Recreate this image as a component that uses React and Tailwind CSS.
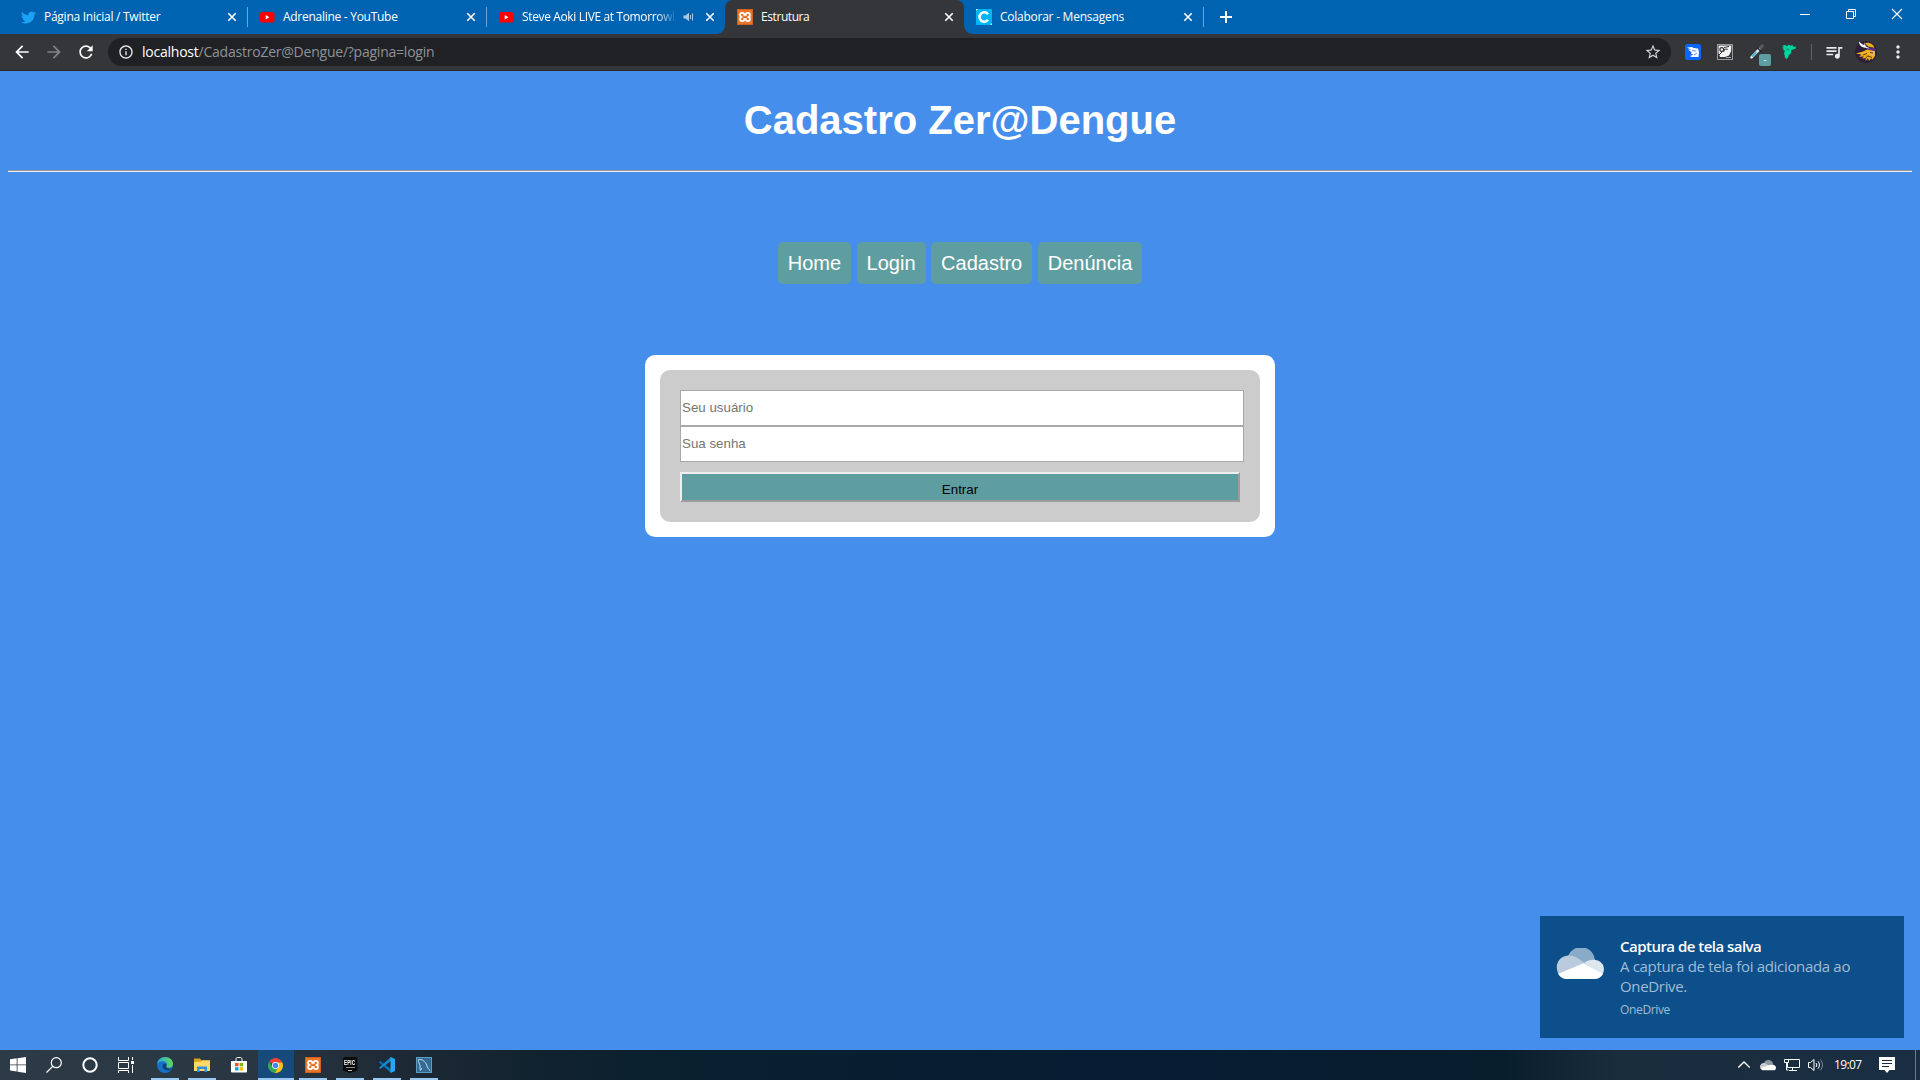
import React from "react";
import { MdArrowBack, MdArrowForward, MdRefresh, MdInfoOutline, MdStarBorder, MdQueueMusic, MdMoreVert } from "react-icons/md";
import { FaTwitter } from "react-icons/fa";

const YouTubeIcon = () => (
  <svg className="h-4 w-4" viewBox="0 0 16 16">
    <rect x="1" y="3" width="14.5" height="10.5" rx="2.6" fill="#f00" />
    <path d="M6.7 6v4.4L10.4 8.2z" fill="#fff" />
  </svg>
);

const XamppIcon = () => (
  <svg className="h-4 w-4" viewBox="0 0 16 16">
    <rect width="16" height="16" rx="1" fill="#e9752a" />
    <rect x=".5" y=".5" width="15" height="15" rx="1" fill="none" stroke="#d0611d" />
    <g fill="#fff">
      <circle cx="5.200" cy="5.900" r="3" /><circle cx="10.800" cy="5.900" r="3" />
      <circle cx="5.200" cy="10.100" r="3" /><circle cx="10.800" cy="10.100" r="3" />
      <path d="M5 6h6v4H5z" />
    </g>
    <g fill="#e9752a">
      <circle cx="5.200" cy="6" r="1.300" /><circle cx="10.800" cy="6" r="1.300" />
      <circle cx="5.200" cy="10" r="1.300" /><circle cx="10.800" cy="10" r="1.300" />
      <path d="M5.500 6.800h5v2.400h-5z" />
    </g>
  </svg>
);

const ColaborarIcon = () => (
  <svg className="h-4 w-4" viewBox="0 0 16 16">
    <rect width="16" height="16" fill="#00b4f5" />
    <path d="M12 5.200A4.700 4.700 0 1 0 12 10.800" fill="none" stroke="#fff" strokeWidth="2.600" />
    <path d="M0 0h2L0 2zM16 16h-2l2-2z" fill="#c8efff" />
  </svg>
);

const CloseIcon = () => (
  <svg className="h-4 w-4 shrink-0" viewBox="0 0 16 16">
    <path d="M4.300 4.300l7.400 7.400M11.700 4.300l-7.400 7.400" stroke="#fff" strokeWidth="1.600" />
  </svg>
);

const AudioIcon = () => (
  <svg className="h-4 w-4 shrink-0" viewBox="0 0 16 16" fill="none" stroke="#a9c8e6">
    <path d="M3.500 6.500h2L9 3.700v8.600L5.500 9.500h-2z" fill="#a9c8e6" stroke="none" />
    <path d="M10.500 6v4M12.500 4.500v7" />
  </svg>
);

const tabs = [
  { title: "Página Inicial / Twitter", icon: <FaTwitter className="h-[15px] w-[15px] text-[#1da1f2]" />, divider: true, fit: "tracking-[-0.26px]" },
  { title: "Adrenaline - YouTube", icon: <YouTubeIcon />, divider: true, fit: "tracking-[-0.28px]" },
  { title: "Steve Aoki LIVE at Tomorrowl", icon: <YouTubeIcon />, audio: true, fit: "tracking-[-0.36px]" },
  { title: "Estrutura", icon: <XamppIcon />, active: true, fit: "tracking-[-0.42px]" },
  { title: "Colaborar - Mensagens", icon: <ColaborarIcon />, divider: true, fit: "tracking-[-0.25px]" },
];

function Tab({ tab }) {
  return (
    <div className={"relative flex h-[34px] w-[239px] items-center pl-3 pr-[7px] " + (tab.active ? "rounded-t-lg bg-[#35363a]" : "")}>
      {tab.active && (
        <>
          <span className="absolute bottom-0 -left-2 h-2 w-2 bg-[radial-gradient(circle_at_0_0,transparent_7.500px,#35363a_8px)]" />
          <span className="absolute bottom-0 -right-2 h-2 w-2 bg-[radial-gradient(circle_at_100%_0,transparent_7.500px,#35363a_8px)]" />
        </>
      )}
      <span className="flex h-4 w-4 shrink-0 items-center justify-center">{tab.icon}</span>
      <span className={"ml-2 min-w-0 flex-1 whitespace-nowrap text-[12px] leading-4 text-white " + tab.fit + (tab.audio ? " [mask-image:linear-gradient(to_right,#000_85%,transparent_98%)]" : "")}>
        {tab.title}
      </span>
      {tab.audio && <span className="mr-[6px] flex"><AudioIcon /></span>}
      <CloseIcon />
      {tab.divider && <span className="absolute -right-px top-[7px] h-5 w-px bg-[#6ba5d8]" />}
    </div>
  );
}

function WindowButtons() {
  return (
    <div className="ml-auto flex h-7 items-center text-white">
      <svg className="h-3 w-[46px]" viewBox="0 0 46 12"><path d="M18 6.500h10" stroke="#fff" /></svg>
      <svg className="h-3 w-[46px]" viewBox="0 0 46 12" fill="none" stroke="#fff"><path d="M18.500 3.500h7v7h-7zM20.500 3.500v-2h7v7h-2" /></svg>
      <svg className="h-3 w-[46px]" viewBox="0 0 46 12"><path d="M18 1l10 10M28 1L18 11" stroke="#fff" strokeWidth="1.100" /></svg>
    </div>
  );
}

const Cell = ({ children }) => <span className="flex h-8 w-8 shrink-0 items-center justify-center">{children}</span>;

const BlueBirdExt = () => (
  <svg className="h-4 w-4" viewBox="0 0 16 16">
    <rect width="16" height="16" rx="2.500" fill="#0a66ff" />
    <path d="M2 3.500l5-.5 1.500 1 4.500.500 1 3.500-.500 5H7L4.500 12l4-1.200-2.500-1 .5-1.500L3 5.500l3 .3z" fill="#fff" />
    <path d="M7 6.500l4 .5M9 11l3-2" stroke="#0a66ff" strokeWidth=".7" />
  </svg>
);

const SketchExt = () => (
  <svg className="h-4 w-4" viewBox="0 0 16 16">
    <rect x=".5" y=".5" width="15" height="15" fill="#35363a" stroke="#9a9a9a" />
    <path d="M1.500 1.500h13l-.5 6-2 4-4 1.500H3L1.500 9z" fill="#f4f4f4" />
    <circle cx="4.800" cy="5.500" r="1.900" fill="none" stroke="#333" strokeWidth="1.200" />
    <path d="M7 3.500l5-1M6.500 8l1.300-3 3 .3M2 11l3-3" stroke="#333" strokeWidth="1" fill="none" />
    <path d="M9 13.500h5" stroke="#aaa" />
  </svg>
);

const PickerExt = () => (
  <span className="relative flex h-4 w-4">
    <svg className="h-4 w-4" viewBox="0 0 16 16">
      <path d="M9.500 6l3.700-4" stroke="#5b5b5b" strokeWidth="3.200" strokeLinecap="round" />
      <path d="M2.500 13.300L10 5.600" stroke="#d9f2f7" strokeWidth="2.600" strokeLinecap="round" />
      <path d="M3.300 12.600L7.500 8.300" stroke="#35b4c8" strokeWidth="1.600" />
      <path d="M8 3.500l4 4" stroke="#202020" strokeWidth="1.300" />
    </svg>
    <span className="absolute left-[10px] top-[10px] flex h-3 w-3 items-center justify-center rounded-[2px] bg-[#5f9ea0] pb-px text-[9px] leading-none text-white">-</span>
  </span>
);

const BirdExt = () => (
  <svg className="h-4 w-4" viewBox="0 0 16 16">
    <path d="M1.500 1.500L4 1l2 1.300L8 .5l1.500 1.300L12 1l-.5 1.500 3.500.3-.5 2-2.500.7L10 6.500l.3 2.500-2.300 2-1 2.500L5.500 15.500 5 13l-1 2-.3-3.500L3 9l1-2.500L1.500 6 3 5 .8 3.500l2-.3z" fill="#00d5a0" />
    <path d="M5.500 5l2.500.5" stroke="#22564b" strokeWidth=".8" />
  </svg>
);

const VikingAvatar = () => (
  <svg className="h-[22px] w-[22px]" viewBox="0 0 22 22">
    <circle cx="11" cy="11" r="11" fill="#2d1f38" />
    <path d="M10 2.200c4-1.700 8.500.8 9.500 4.500l-6-1z" fill="#e9ad1c" />
    <path d="M11 6.500l9.500.8.5 2.500-9-1z" fill="#5a2d86" />
    <path d="M4 .5c0 3.500 2 5.500 6.500 6.300l4 .7-2-2.700C9 4.500 6.500 3 4 .5zM9 .8c0 2.200 1.500 3.400 3.700 4.200l1.300 1.800C11 6 8.500 4 9 .8z" fill="#fff" />
    <path d="M8 10.500l4-2 8 1.500v5l-2.500 3.500-1.500-1-2 2.500-1-2.700L10.500 20l.3-3L7 17.500l2-2-5 .3 2.500-2L1 12.500z" fill="#eeb01e" />
    <path d="M14.500 10l5 .3.300 3.200-1.800 1.500-2.500-1.500z" fill="#e4b08c" />
    <path d="M15 11.500l3 .5M13 15l4 1.500M8 14l4-1.500M11 17l2-2.500" stroke="#4a2c14" strokeWidth=".9" />
  </svg>
);

function Browser() {
  return (
    <header className="shrink-0">
      <div className="flex h-[34px] bg-[#0063b1] pl-2">
        {tabs.map((t) => <Tab key={t.title} tab={t} />)}
        <span className="ml-[15px] flex h-[34px] w-4 items-center">
          <svg className="h-4 w-4" viewBox="0 0 16 16"><path d="M8 2v12M2 8h12" stroke="#fff" strokeWidth="2" /></svg>
        </span>
        <WindowButtons />
      </div>
      <div className="flex h-[37px] items-center border-b border-[#28292c] bg-[#35363a] pl-1.5">
        <Cell><MdArrowBack className="h-5 w-5 text-white" /></Cell>
        <Cell><MdArrowForward className="h-5 w-5 text-[#828387]" /></Cell>
        <Cell><MdRefresh className="h-5 w-5 text-white" /></Cell>
        <div className="ml-1.5 flex h-7 w-[1563px] items-center rounded-full bg-[#202124] pl-[10px] pr-[9px]">
          <MdInfoOutline className="h-4 w-4 text-[#e8eaed]" />
          <span className="ml-2 text-[14px] leading-5 tracking-[-0.23px] text-[#8f9398]"><span className="text-white">localhost</span>/CadastroZer@Dengue/?pagina=login</span>
          <MdStarBorder className="ml-auto h-[18px] w-[18px] text-[#d0d1d4]" />
        </div>
        <div className="ml-1.5 flex items-center">
          <Cell><BlueBirdExt /></Cell>
          <Cell><SketchExt /></Cell>
          <Cell><PickerExt /></Cell>
          <Cell><BirdExt /></Cell>
          <span className="ml-1.5 mr-[6px] h-4 w-px bg-[#5f6064]" />
          <Cell><MdQueueMusic className="h-5 w-5 text-[#e8eaed]" /></Cell>
          <Cell><VikingAvatar /></Cell>
          <Cell><MdMoreVert className="h-5 w-5 text-[#e8eaed]" /></Cell>
        </div>
      </div>
    </header>
  );
}

function Page() {
  return (
    <main className="flex flex-1 flex-col items-center bg-[#468eeb] px-2 font-['Liberation_Sans',Arial,sans-serif]">
      <h1 className="mt-[27px] text-[40px] font-bold leading-[45px] text-white">Cadastro Zer@Dengue</h1>
      <hr className="mt-[27px] h-0.5 w-full border-b border-t border-b-[#eee] border-t-[#9a9a9a]" />
      <nav className="mt-[70px] flex gap-[5.560px]">
        {["Home", "Login", "Cadastro", "Denúncia"].map((label) => (
          <a key={label} className="h-[42px] rounded-[5px] bg-[#5f9ea0] px-[10px] pt-[10px] text-[20px] leading-[23px] text-white">{label}</a>
        ))}
      </nav>
      <section className="mt-[71px] w-[630px] rounded-[10px] bg-white p-[15px]">
        <form className="flex flex-col rounded-[10px] bg-[#ccc] p-5 text-[13.333px]">
          <input placeholder="Seu usuário" className="h-9 w-[564px] border border-[#a9a9a9] bg-white px-px pb-0.5 placeholder:text-[#757575]" />
          <input placeholder="Sua senha" className="h-9 w-[564px] border border-[#a9a9a9] bg-white px-px pb-0.5 placeholder:text-[#757575]" />
          <button type="button" className="mt-[10px] h-[30px] border-2 border-b-[#9c9c9c] border-l-[#efefef] border-r-[#9c9c9c] border-t-[#efefef] bg-[#5f9ea0] pt-[5px] text-black">Entrar</button>
        </form>
      </section>
      <aside className="mb-3 mr-2 mt-auto flex h-[122px] w-[364px] self-end bg-[#0d4f8a] pl-4 font-['Open_Sans','Segoe_UI',sans-serif]">
        <svg className="mt-8 h-8 w-12" viewBox="0 0 48 32">
          <path d="M12 8a14 14 0 0 1 27 4l-11 3-15-7z" fill="#8aabc8" />
          <path d="M2.200 25.500C-1.500 18 2 8.500 12 7.500c4-.3 7 .8 9.500 2.500l7.500 5z" fill="#b9cbdc" />
          <path d="M28 15c3-2.500 7-3.500 10.500-3.300C47 12.500 50 20 46.500 26.500z" fill="#dce6ef" />
          <path d="M2 25.500L28 15l19 11A10 10 0 0 1 38.500 31H11c-4 0-7.500-2-9-5.500z" fill="#fff" />
        </svg>
        <div className="ml-4 pt-5">
          <p className="text-[15px] font-semibold leading-5 tracking-[-0.52px] text-white">Captura de tela salva</p>
          <p className="w-[260px] text-[15px] leading-5 tracking-[-0.33px] text-[#a0bcd5]">A captura de tela foi adicionada ao<br />OneDrive.</p>
          <p className="mt-[5px] text-[12px] leading-[18px] tracking-[-0.35px] text-[#a0bcd5]">OneDrive</p>
        </div>
      </aside>
    </main>
  );
}

const startIcons = [
  <svg className="h-4 w-4" viewBox="0 0 16 16" fill="#fff"><path d="M0 2.300L6.700 1.300v6.200H0zM7.500 1.200L16 0v7.500H7.500zM0 8.300h6.700v6.200L0 13.600zM7.500 8.300H16V16l-8.500-1.200z" /></svg>,
  <svg className="h-4 w-4" viewBox="0 0 16 16" fill="none" stroke="#fff" strokeWidth="1.200"><circle cx="10.300" cy="5.700" r="5" /><path d="M6.700 9.300L.5 15.500" /></svg>,
  <svg className="h-4 w-4" viewBox="0 0 16 16" fill="none" stroke="#fff" strokeWidth="2"><circle cx="8" cy="8" r="6.700" /></svg>,
  <svg className="h-4 w-4" viewBox="0 0 16 16" fill="none" stroke="#fff"><path d="M.5 0v3.500h10V0M.5 5.500h10v6H.5zM.5 16v-2.500h10V16M14.500 0v3M14.500 8v8" /><path d="M13 4h3v3h-3z" fill="#fff" stroke="none" /></svg>,
];

const EdgeIcon = () => (
  <svg className="h-4 w-4" viewBox="0 0 16 16">
    <defs>
      <linearGradient id="edgeTop"><stop offset="0" stopColor="#2aa9e0" /><stop offset="1" stopColor="#63d853" /></linearGradient>
    </defs>
    <circle cx="8" cy="8" r="8" fill="#1672c8" />
    <path d="M.1 7C.8 2.800 4 0 8 0c5 0 8 3.600 8 6.800 0 2.700-2 4-4 4-1.700 0-2.700-.7-2.700-1.300 0-.4.6-.8.6-1.800C9.900 5.800 8 4.300 5.500 4.300 3 4.300.8 5.500.1 7z" fill="url(#edgeTop)" />
    <path d="M5.600 9.500c0-2 1.300-3 2.500-3 1 0 1.500.8 1.400 1.700-.3.500-.6.800-.6 1.300 0 1.200 1.600 2.300 3.600 2.300 1.200 0 2.100-.3 2.800-.7-.9 1.700-2.500 2.300-4.200 2.300-3 0-5.500-1.700-5.500-3.900z" fill="#123f70" />
  </svg>
);

const FolderIcon = () => (
  <svg className="h-4 w-4" viewBox="0 0 16 16">
    <path d="M0 1.500h6l1.500 1.700H16V14H0z" fill="#e0a020" />
    <path d="M0 5l7-.3 1.200-1.200H16V14H0z" fill="#ffd968" />
    <path d="M3 15V9.500h10V15h-2.500v-3h-5v3z" fill="#2f93dc" />
  </svg>
);

const StoreIcon = () => (
  <svg className="h-4 w-4" viewBox="0 0 16 16">
    <path d="M5 4.500V2.300C5 1 5.800.5 6.600.5h2.800C10.200.5 11 1 11 2.300v2.200" fill="none" stroke="#fff" />
    <path d="M0 4h16v10.500a1 1 0 0 1-1 1H1a1 1 0 0 1-1-1z" fill="#fff" />
    <path d="M4 6h3.500v3.300H4z" fill="#f25022" /><path d="M8.500 6H12v3.300H8.500z" fill="#7fba00" />
    <path d="M4 10.200h3.500v3.300H4z" fill="#00a4ef" /><path d="M8.500 10.200H12v3.300H8.500z" fill="#ffb900" />
  </svg>
);

const ChromeIcon = () => (
  <svg className="mr-px h-[15px] w-[15px]" viewBox="0 0 16 16">
    <path d="M8 8L1.100 4A8 8 0 0 1 14.900 4L15.500 5H8z" fill="#e94235" />
    <path d="M1.100 4A8 8 0 0 0 7.300 16L11 10 5 9.500z" fill="#34a853" />
    <path d="M15.300 4.800A8 8 0 0 1 7.300 16L11 9.800 10 4.800z" fill="#fbc116" />
    <circle cx="8" cy="8" r="3.700" fill="#fff" /><circle cx="8" cy="8" r="2.900" fill="#4285f4" />
  </svg>
);

const EpicIcon = () => (
  <span className="flex h-4 w-[15px] flex-col items-center rounded-[2px] bg-[#0b0b0b] pt-px text-white [clip-path:polygon(0_0,100%_0,100%_85%,50%_100%,0_85%)]">
    <span className="origin-top scale-x-[0.72] scale-y-[1.2] font-['Liberation_Sans'] text-[6.500px] font-bold leading-[7px]">EPIC</span>
    <span className="mt-[2px] h-px w-[9px] bg-[#8b8b8b]" />
    <span className="mt-[2px] h-px w-1 bg-[#bbb]" />
  </span>
);

const CodeIcon = () => (
  <svg className="h-4 w-4" viewBox="0 0 16 16">
    <path d="M0 5.200L1.200 4 12 12v4L.200 5.600z" fill="#0b6fb8" />
    <path d="M0 10.800L1.200 12 12 4V0L.200 10.400z" fill="#1787cf" />
    <path d="M11.500 0L16 2v12l-4.500 2z" fill="#29a6f0" />
  </svg>
);

const MySqlIcon = () => (
  <svg className="h-4 w-4" viewBox="0 0 16 16">
    <rect x=".5" y=".5" width="15" height="15" fill="#326b93" stroke="#5e9cc0" />
    <path d="M4.500 13.500C3.500 11 4.500 9.500 3.700 7.500 2.700 5 1.800 3.500 2.500 2.500c3.500-.5 7 2 8.200 5.500.8 2.300 1.300 4 3.800 6" fill="none" stroke="#d8e7f0" strokeWidth=".9" />
    <path d="M4.500 13.500l1.300-2.500" stroke="#d8e7f0" strokeWidth=".8" />
  </svg>
);

const apps = [
  { id: "edge", icon: <EdgeIcon />, open: true },
  { id: "files", icon: <FolderIcon />, open: true },
  { id: "store", icon: <StoreIcon /> },
  { id: "chrome", icon: <ChromeIcon />, open: true, active: true },
  { id: "xampp", icon: <XamppIcon />, open: true },
  { id: "epic", icon: <EpicIcon />, open: true },
  { id: "code", icon: <CodeIcon />, open: true },
  { id: "mysql", icon: <MySqlIcon />, open: true },
];

function Taskbar() {
  return (
    <footer className="flex h-[30px] shrink-0 items-center bg-[linear-gradient(to_right,#2c3b47_0,#293742_260px,#1d2a35_400px,#10222f_550px,#08202f_700px,#051c33_1150px,#081d2c_1500px,#1a2d3d_1620px,#1a2e43_1920px)]">
      {startIcons.map((icon, i) => <span key={i} className="flex h-full w-9 items-center justify-center">{icon}</span>)}
      <div className="ml-[3px] flex h-full">
        {apps.map((app) => (
          <span key={app.id} className={"relative mr-px flex h-full w-9 items-center justify-center " + (app.active ? "bg-[#154a7a]" : "")}>
            {app.icon}
            {app.open && <span className={"absolute bottom-0 h-0.5 bg-[#99c9f3] " + (app.active ? "w-9" : "w-7")} />}
          </span>
        ))}
      </div>
      <div className="ml-auto flex h-full items-center">
        <svg className="h-4 w-4" viewBox="0 0 16 16" fill="none" stroke="#fff" strokeWidth="1.300"><path d="M2.300 10.500L8 5l5.700 5.500" /></svg>
        <svg className="ml-2 h-4 w-4" viewBox="0 0 16 16"><path d="M4 6a4.700 4.700 0 0 1 9 1L9 9z" fill="#8e99a4" /><path d="M1 12a3.600 3.600 0 0 1 3-6c2 0 4 2 5.500 3z" fill="#c9ced3" /><path d="M.6 11L9.500 8c3-1.500 6 0 6.500 2.500 0 2-1 2.800-2.500 2.800h-10C2 13.300 1 12.500.6 11z" fill="#fff" /></svg>
        <svg className="ml-2 h-4 w-4" viewBox="0 0 16 16" fill="none" stroke="#fff"><path d="M4.500 2.500h11v8h-12V6M8.500 10.500v3M5 13.500h8M.5 2.500h4v3h-4zM2.500 6v7h2" /></svg>
        <svg className="ml-2 h-4 w-4" viewBox="0 0 16 16" fill="none" stroke="#fff"><path d="M.5 5.500h2l3.500-3v11l-3.500-3h-2zM8 6a3 3 0 0 1 0 4M10 4.300a5.500 5.500 0 0 1 0 7.400" /><path d="M12.300 2.500a8 8 0 0 1 0 11" stroke="#7c8996" /></svg>
        <span className="ml-[10px] w-[28px] whitespace-nowrap text-[12px] leading-4 tracking-[-0.65px] text-white">19:07</span>
        <svg className="ml-[17px] h-4 w-4" viewBox="0 0 16 16"><path d="M0 0h16v13h-5.500L8 16l-2.500-3H0z" fill="#fff" /><path d="M3 3.500h10M3 6.500h10M3 9.500h7" stroke="#1a2e43" /></svg>
        <span className="ml-5 mr-1 h-full w-px bg-[#6d7b88]" />
      </div>
    </footer>
  );
}

export default function App() {
  return (
    <div className="flex h-[1080px] w-[1920px] flex-col overflow-hidden font-['Open_Sans','Segoe_UI',sans-serif]">
      <Browser />
      <Page />
      <Taskbar />
    </div>
  );
}
